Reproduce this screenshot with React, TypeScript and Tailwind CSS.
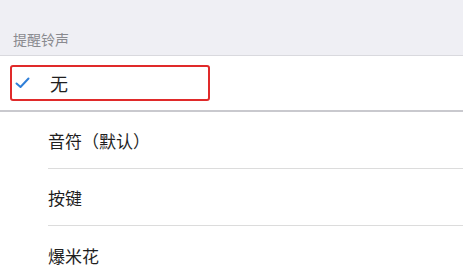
import React from "react";

const font = { fontFamily: '"Noto Sans CJK SC", "Liberation Sans", sans-serif' };

function Check() {
  return (
    <svg width="15" height="12" viewBox="0 0 15 12" className="shrink-0">
      <path d="M1.5 6.5 L5.5 10 L13.5 1.5" fill="none" stroke="#2f7fd8" strokeWidth="2" strokeLinecap="round" strokeLinejoin="round" />
    </svg>
  );
}

const options = ["音符（默认）", "按键", "爆米花"];

export default function App() {
  return (
    <div className="w-[463px] h-[278px] overflow-hidden bg-white" style={font}>
      <div className="h-[56px] bg-[#efeff4] flex items-end pb-[9px] pl-[13px] border-b border-[#d9d9de]">
        <span className="text-[14px] text-[#8a8a8f] leading-none">提醒铃声</span>
      </div>
      <div className="h-[56px] flex items-center border-b-2 border-[#c9c9ce]">
        <div className="ml-[10px] w-[200px] h-[36px] border-2 border-[#e02a2a] rounded-[3px] flex items-center pl-[3px]">
          <Check />
          <span className="ml-[20px] text-[18px] text-[#1f1f1f] leading-none">无</span>
        </div>
      </div>
      {options.map((t, i) => (
        <div key={t} className="pl-[48px]">
          <div className={"h-[57px] flex items-center pt-[1px] " + (i < options.length - 1 ? "border-b border-[#dcdcdc]" : "")}>
            <span className="text-[17px] text-[#1f1f1f] leading-none">{t}</span>
          </div>
        </div>
      ))}
    </div>
  );
}
